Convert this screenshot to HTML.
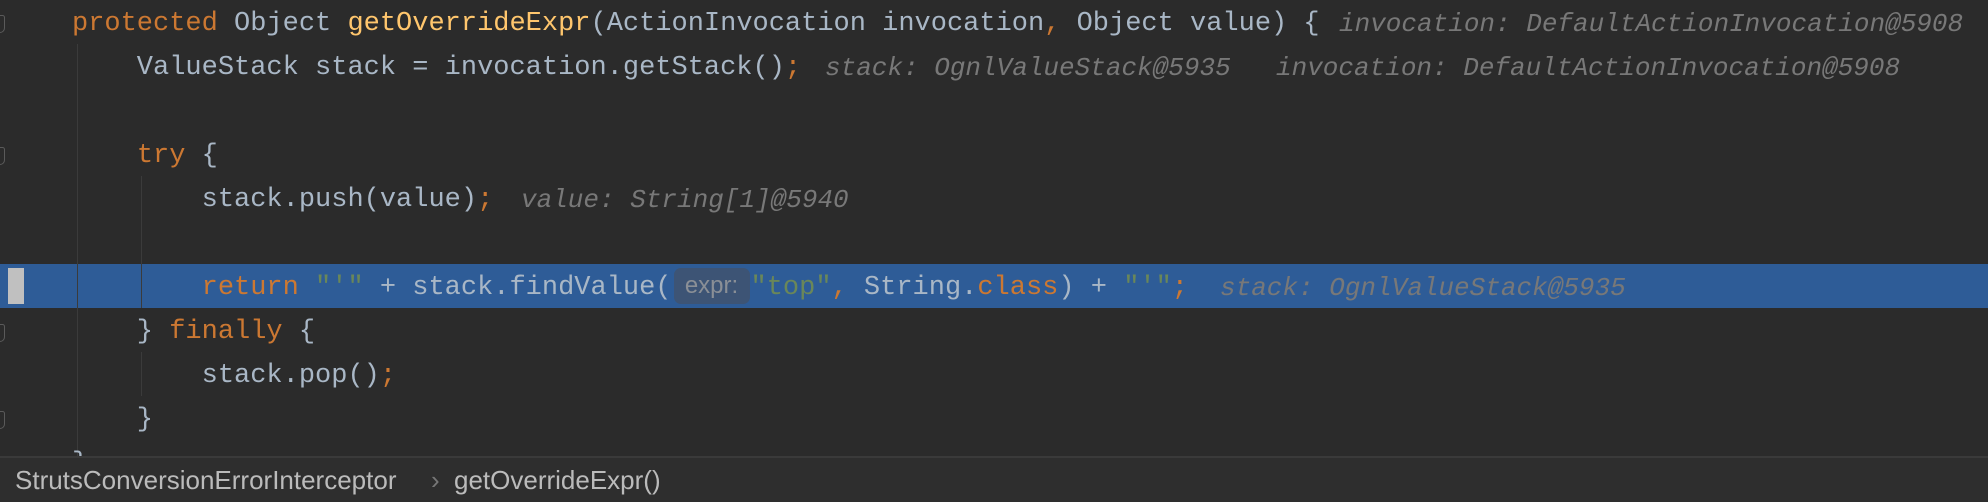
<!DOCTYPE html>
<html><head><meta charset="utf-8"><style>
html,body{margin:0;padding:0;width:1988px;height:502px;overflow:hidden;background:#2b2b2b;}
.l{position:absolute;left:0;height:44px;line-height:44px;white-space:pre;font-family:"Liberation Mono",monospace;font-size:27px;color:#a9b7c6;}
.c{position:absolute;left:72px;top:2px;}
.k{color:#cc7832}.m{color:#ffc66d}.s{color:#6a8759}
.h{position:absolute;top:2px;font-style:italic;color:#787878;font-size:26px;}
.g{position:absolute;width:1px;background:#3b3b3b;}
.f{position:absolute;left:0;width:4px;height:16px;border:1.5px solid #5a5a5a;border-left:none;border-radius:0 3px 6px 0;}
.chip{display:inline-block;box-sizing:border-box;width:76px;text-align:center;background:#3d5475;color:#8a8f96;font-family:"Liberation Sans",sans-serif;font-size:24px;border-radius:7px;line-height:36px;height:36px;vertical-align:1px;margin:0 1px 0 2px;}
#sb{position:absolute;left:0;top:456px;width:1988px;height:46px;background:#2e2e2e;border-top:2px solid #3a3a3a;box-sizing:border-box;font-family:"Liberation Sans",sans-serif;font-size:26px;color:#bbbbbb;line-height:44px;}
</style></head><body>
<div style="position:absolute;left:0;top:264px;width:1988px;height:44px;background:#2e5c97"></div>
<div style="position:absolute;left:8px;top:268px;width:16px;height:36px;background:#c0c0c0"></div>
<div class="g" style="left:77px;top:44px;height:412px"></div>
<div class="g" style="left:141px;top:176px;height:132px"></div>
<div class="g" style="left:141px;top:352px;height:44px"></div>
<div class="f" style="top:15px"></div>
<div class="f" style="top:147px"></div>
<div class="f" style="top:324px"></div>
<div class="f" style="top:411px"></div>

<div class="l" style="top:0"><span class="c"><span class="k">protected</span> Object <span class="m">getOverrideExpr</span>(ActionInvocation invocation<span class="k">,</span> Object value) {</span><span class="h" style="left:1339px">invocation: DefaultActionInvocation@5908</span></div>
<div class="l" style="top:44px"><span class="c">    ValueStack stack = invocation.getStack()<span class="k">;</span></span><span class="h" style="left:825px">stack: OgnlValueStack@5935</span><span class="h" style="left:1276px">invocation: DefaultActionInvocation@5908</span></div>
<div class="l" style="top:132px"><span class="c">    <span class="k">try</span> {</span></div>
<div class="l" style="top:176px"><span class="c">        stack.push(value)<span class="k">;</span></span><span class="h" style="left:521px">value: String[1]@5940</span></div>
<div class="l" style="top:264px"><span class="c">        <span class="k">return</span> <span class="s">"'"</span> + stack.findValue(<span class="chip">expr:</span><span class="s">"top"</span><span class="k">,</span> String.<span class="k">class</span>) + <span class="s">"'"</span><span class="k">;</span></span><span class="h" style="left:1220px">stack: OgnlValueStack@5935</span></div>
<div class="l" style="top:308px"><span class="c">    } <span class="k">finally</span> {</span></div>
<div class="l" style="top:352px"><span class="c">        stack.pop()<span class="k">;</span></span></div>
<div class="l" style="top:396px"><span class="c">    }</span></div>
<div class="l" style="top:440px"><span class="c">}</span></div>

<div id="sb"><span style="position:absolute;left:15px">StrutsConversionErrorInterceptor</span><span style="position:absolute;left:431px;color:#777">›</span><span style="position:absolute;left:454px">getOverrideExpr()</span></div>
</body></html>
